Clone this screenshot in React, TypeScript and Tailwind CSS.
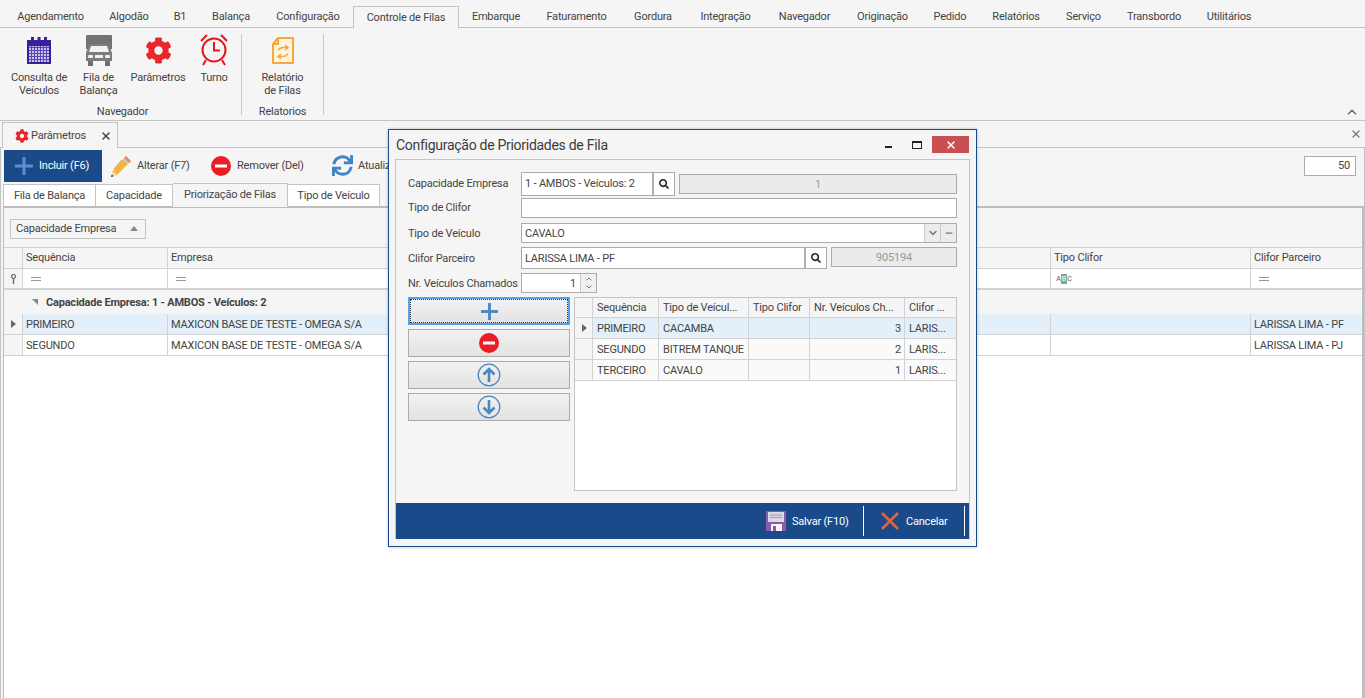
import { FaCog, FaSync, FaSearch } from "react-icons/fa";
import { ChevronDown, ChevronUp, X, Minus } from "lucide-react";

const menuTabs = [
  { label: "Agendamento", width: "w-[93px]" },
  { label: "Algodão", width: "w-[64px]" },
  { label: "B1", width: "w-[38px]" },
  { label: "Balança", width: "w-[64px]" },
  { label: "Configuração", width: "w-[90px]" },
  { label: "Controle de Filas", width: "w-[106px]", active: true },
  { label: "Embarque", width: "w-[74px]" },
  { label: "Faturamento", width: "w-[87px]" },
  { label: "Gordura", width: "w-[66px]" },
  { label: "Integração", width: "w-[79px]" },
  { label: "Navegador", width: "w-[79px]" },
  { label: "Originação", width: "w-[77px]" },
  { label: "Pedido", width: "w-[58px]" },
  { label: "Relatórios", width: "w-[74px]" },
  { label: "Serviço", width: "w-[61px]" },
  { label: "Transbordo", width: "w-[80px]" },
  { label: "Utilitários", width: "w-[70px]" },
];

function CalendarIcon() {
  return (
    <svg width="26" height="28" viewBox="0 0 26 28">
      <rect x="1" y="3" width="24" height="24" fill="#3b1f9e" />
      <rect x="5" y="0" width="3" height="5" fill="#3b1f9e" />
      <rect x="11.5" y="0" width="3" height="5" fill="#3b1f9e" />
      <rect x="18" y="0" width="3" height="5" fill="#3b1f9e" />
      <rect x="3" y="9" width="20" height="16" fill="#c9c3ea" />
      {[10, 13, 16, 19, 22].map((y) => (
        <rect key={y} x="3" y={y} width="20" height="1" fill="#5a45b5" />
      ))}
      {[5, 8, 11, 14, 17, 20].map((x) => (
        <rect key={x} x={x} y="9" width="1" height="16" fill="#5a45b5" />
      ))}
    </svg>
  );
}

function TruckIcon() {
  return (
    <svg width="28" height="32" viewBox="0 0 28 32">
      <path d="M2 0h24a1 1 0 0 1 1 1v13H1V1a1 1 0 0 1 1-1z" fill="#737373" />
      <path d="M4 9h20l3 9v8H1v-8z" fill="#7d7d7d" />
      <path d="M6 11h16l2 6H4z" fill="#f2f2f2" />
      <rect x="3" y="20" width="5" height="3" rx="1" fill="#f2f2f2" />
      <rect x="20" y="20" width="5" height="3" rx="1" fill="#f2f2f2" />
      <rect x="10" y="20" width="8" height="3" fill="#f2f2f2" />
      <rect x="3" y="26" width="5" height="5" fill="#6f6f6f" />
      <rect x="20" y="26" width="5" height="5" fill="#6f6f6f" />
    </svg>
  );
}

function ClockIcon() {
  return (
    <svg width="28" height="33" viewBox="0 0 28 33" fill="none" stroke="#e8141c" strokeWidth="2">
      <circle cx="14" cy="16" r="11.5" />
      <path d="M14 8v8.5h6" />
      <path d="M1 7 7 1M27 7 21 1M6 26l-3 5M22 26l3 5" />
    </svg>
  );
}

function ReportIcon() {
  return (
    <svg width="22" height="27" viewBox="0 0 22 27" fill="none">
      <path d="M6 1h15v25H1V7z" fill="#fdf3df" stroke="#f5a93a" strokeWidth="2" strokeLinejoin="round" />
      <path d="M6 1v6H1" stroke="#f5a93a" strokeWidth="2" />
      <path d="M6 13.5c1-2 3-3 6-3h3M13 8l3 2.5L13 13" stroke="#f5a93a" strokeWidth="1.6" />
      <path d="M16 16.5c-1 2-3 3-6 3H7M9 17l-3 2.5L9 22" stroke="#f5a93a" strokeWidth="1.6" />
    </svg>
  );
}

function PencilIcon() {
  return (
    <svg width="24" height="24" viewBox="0 0 24 24">
      <path d="M17 2 22 7 8 21 2 23l2-6z" fill="#f6b53a" />
      <path d="M17 2 22 7 20 9 15 4z" fill="#e8877c" />
      <path d="M15 4 20 9 18.5 10.5 13.5 5.500z" fill="#c9c9c9" />
      <path d="M4 17 8 21 2 23z" fill="#f3dcb0" />
      <path d="M2.800 20.500 4.500 22.300 2 23z" fill="#333" />
      <path d="M13 6 5 15" stroke="#d98f1c" strokeWidth="1" />
    </svg>
  );
}

function RemoveIcon({ size }: { size: number }) {
  return (
    <svg width={size} height={size} viewBox="0 0 20 20">
      <circle cx="10" cy="10" r="10" fill="#ed1c24" />
      <rect x="4" y="8.500" width="12" height="3" fill="#fff" />
    </svg>
  );
}

function PlusIcon({ color, size }: { color: string; size: number }) {
  return (
    <svg width={size} height={size} viewBox="0 0 18 18">
      <rect x="7.500" y="0" width="3" height="18" fill={color} />
      <rect x="0" y="7.500" width="18" height="3" fill={color} />
    </svg>
  );
}

function ArrowCircle({ up }: { up?: boolean }) {
  return (
    <svg width="24" height="24" viewBox="0 0 24 24" fill="none" stroke="#4a86c0">
      <circle cx="12" cy="12" r="10.800" strokeWidth="1.300" />
      <path
        d={up ? "M12 19V6M6.500 11.500 12 6l5.500 5.500" : "M12 5v13M6.500 12.500 12 18l5.500-5.500"}
        strokeWidth="2.600"
      />
    </svg>
  );
}

function SaveIcon() {
  return (
    <svg width="20" height="20" viewBox="0 0 20 20">
      <path d="M0 0h20v20H0z" fill="#8b5aa8" />
      <rect x="2" y="1" width="16" height="10" fill="#d9d9e4" />
      <rect x="4" y="3.500" width="12" height="1" fill="#9a9ab0" />
      <rect x="4" y="6" width="12" height="1" fill="#9a9ab0" />
      <rect x="5" y="13" width="11" height="7" fill="#f4f4f4" />
      <rect x="7" y="15" width="3" height="5" fill="#8b5aa8" />
    </svg>
  );
}

function AbcIcon() {
  return (
    <span className="flex items-center text-[7px] leading-[10px] tracking-normal text-[#555]">
      <span className="w-[5px] text-center">A</span>
      <span className="w-[6px] bg-[#7aa99a] text-center text-white">B</span>
      <span className="w-[5px] text-center">C</span>
    </span>
  );
}

function EqualsIcon() {
  return <span className="block h-[4px] w-[10px] border-y border-[#999]" />;
}

function PinIcon() {
  return (
    <svg width="7" height="10" viewBox="0 0 7 10" fill="none">
      <circle cx="3.500" cy="2.500" r="2" stroke="#666" strokeWidth="1.200" />
      <path d="M3.500 4.500V10" stroke="#666" strokeWidth="1.400" />
    </svg>
  );
}

function RibbonButton({
  icon,
  lines,
  width,
}: {
  icon: React.ReactNode;
  lines: string[];
  width: string;
}) {
  return (
    <div className={`flex flex-col items-center ${width}`}>
      <div className="flex h-[33px] items-center justify-center">{icon}</div>
      <div className="mt-[4px] whitespace-nowrap text-center leading-[13px]">
        {lines.map((l) => (
          <div key={l}>{l}</div>
        ))}
      </div>
    </div>
  );
}

function SearchButton() {
  return (
    <div className="flex h-full w-[22px] items-center justify-center border-l-2 border-[#b0b0b0] bg-white">
      <FaSearch size={10} className="text-[#222]" />
    </div>
  );
}

function Label({ children, low }: { children: React.ReactNode; low?: boolean }) {
  return (
    <span className={`block w-[113px] shrink-0 whitespace-nowrap ${low ? "pt-[2px]" : ""}`}>{children}</span>
  );
}

function SideButton({ children, focused }: { children: React.ReactNode; focused?: boolean }) {
  return (
    <div
      className={`flex h-[28px] items-center justify-center bg-gradient-to-b from-[#f2f2f2] to-[#e2e2e2] ${
        focused
          ? "border-2 border-[#5aa0e6] outline-1 -outline-offset-3 outline-dotted outline-[#333]"
          : "border border-[#ababab]"
      }`}
    >
      {children}
    </div>
  );
}

const modalCols = ["w-[66px]", "w-[90px]", "w-[61px]", "w-[95px]", "w-[51px]"];

const modalRows = [
  { seq: "PRIMEIRO", tipo: "CACAMBA", nr: "3", active: true },
  { seq: "SEGUNDO", tipo: "BITREM TANQUE", nr: "2" },
  { seq: "TERCEIRO", tipo: "CAVALO", nr: "1" },
];

function Modal() {
  return (
    <div className="absolute left-[388px] top-[129px] flex h-[418px] w-[589px] flex-col border border-[#1a4a8a] bg-[#f5f5f5] pb-[7px] pl-[6px] pr-[6px] shadow-[0_0_3px_rgba(0,0,0,0.25)]">
      <div className="flex h-[29px] shrink-0 items-center justify-between pl-[1px] pr-[1px]">
        <span className="pt-[2px] text-[14px] tracking-[-0.28px] text-[#3c3c3c]">
          Configuração de Prioridades de Fila
        </span>
        <div className="flex items-center">
          <div className="mr-[20px] mt-[5px] h-[2px] w-[7px] bg-[#222]" />
          <div className="mr-[10px] h-[8px] w-[10px] border border-t-2 border-[#222]" />
          <div className="flex h-[17px] w-[37px] items-center justify-center bg-[#c85050]">
            <X size={12} strokeWidth={3} className="text-white" />
          </div>
        </div>
      </div>
      <div className="flex min-h-0 flex-1 flex-col border border-[#c4c4c4] border-b-0">
        <div className="flex-1 pl-[12px] pr-[12px] pt-[12px]">
          <div className="flex h-[24px] items-center">
            <Label>Capacidade Empresa</Label>
            <div className="flex h-full w-[154px] items-center border border-[#ababab] bg-white">
              <span className="flex-1 pl-[3px]">1 - AMBOS - Veículos: 2</span>
              <SearchButton />
            </div>
            <div className="ml-[4px] flex h-[20px] flex-1 items-center justify-center border border-[#ababab] bg-[#ebebeb] pt-[2px] text-[#999]">
              1
            </div>
          </div>
          <div className="mt-[2px] flex h-[20px] items-center">
            <Label>Tipo de Clifor</Label>
            <div className="h-full flex-1 border border-[#ababab] bg-white" />
          </div>
          <div className="mt-[5px] flex h-[20px] items-center">
            <Label low>Tipo de Veículo</Label>
            <div className="flex h-full flex-1 items-center border border-[#ababab] bg-white">
              <span className="flex-1 pl-[3px] pt-[2px]">CAVALO</span>
              <div className="flex h-full w-[16px] items-center justify-center border-l border-[#c8c8c8] bg-[#ececec]">
                <ChevronDown size={12} strokeWidth={3} className="text-[#777]" />
              </div>
              <div className="flex h-full w-[16px] items-center justify-center border-l border-[#c8c8c8] bg-[#ececec]">
                <Minus size={10} strokeWidth={3} className="text-[#777]" />
              </div>
            </div>
          </div>
          <div className="mt-[4px] flex h-[22px] items-start">
            <span className="flex h-[20px] shrink-0 items-center pt-[4px]">
              <Label>Clifor Parceiro</Label>
            </span>
            <div className="flex h-full w-[306px] items-center border border-[#ababab] bg-white">
              <span className="flex-1 pl-[3px] pt-[2px]">LARISSA LIMA - PF</span>
              <SearchButton />
            </div>
            <div className="ml-[4px] flex h-[20px] flex-1 items-center justify-center border border-[#ababab] bg-[#ebebeb] pt-[2px] text-[#999]">
              905194
            </div>
          </div>
          <div className="mt-[4px] flex h-[20px] items-center">
            <Label low>Nr. Veículos Chamados</Label>
            <div className="flex h-full w-[76px] items-center border border-[#ababab] bg-white">
              <span className="flex-1 pr-[4px] pt-[2px] text-right">1</span>
              <div className="flex h-full w-[16px] flex-col items-center justify-center border-l border-[#c8c8c8] bg-[#f0f0f0]">
                <ChevronUp size={8} strokeWidth={3} className="text-[#777]" />
                <ChevronDown size={8} strokeWidth={3} className="text-[#777]" />
              </div>
            </div>
          </div>
          <div className="mt-[4px] flex">
            <div className="flex w-[162px] flex-col gap-[4px]">
              <SideButton focused>
                <PlusIcon color="#4a86c0" size={17} />
              </SideButton>
              <SideButton>
                <RemoveIcon size={20} />
              </SideButton>
              <SideButton>
                <ArrowCircle up />
              </SideButton>
              <SideButton>
                <ArrowCircle />
              </SideButton>
            </div>
            <div className="ml-[4px] h-[194px] flex-1 border border-[#c4c4c4] bg-white">
              <div className="flex h-[20px] bg-[#f5f5f5]">
                <div className="w-[18px] border-b border-r border-[#d2d2d2]" />
                {["Sequência", "Tipo de Veícul...", "Tipo Clifor", "Nr. Veículos Ch...", "Clifor ..."].map(
                  (h, i) => (
                    <div
                      key={h}
                      className={`${modalCols[i]} flex items-center truncate whitespace-nowrap border-b border-r border-[#d2d2d2] pl-[4px] pt-[2px] last:border-r-0`}
                    >
                      {h}
                    </div>
                  ),
                )}
              </div>
              {modalRows.map((r) => (
                <div key={r.seq} className={`flex h-[21px] ${r.active ? "bg-[#e3eff9]" : "bg-[#fafafa]"}`}>
                  <div className="flex w-[18px] items-center justify-center border-b border-r border-[#d2d2d2] bg-[#f5f5f5]">
                    {r.active && (
                      <span className="ml-[2px] border-y-[4px] border-l-[5px] border-y-transparent border-l-[#666]" />
                    )}
                  </div>
                  <div className={`${modalCols[0]} flex items-center border-b border-r border-[#d2d2d2] pl-[4px] pt-[2px]`}>
                    {r.seq}
                  </div>
                  <div
                    className={`${modalCols[1]} flex items-center whitespace-nowrap border-b border-r border-[#d2d2d2] pl-[4px] pt-[2px]`}
                  >
                    {r.tipo}
                  </div>
                  <div className={`${modalCols[2]} border-b border-r border-[#d2d2d2]`} />
                  <div
                    className={`${modalCols[3]} flex items-center justify-end border-b border-r border-[#d2d2d2] pr-[3px] pt-[2px]`}
                  >
                    {r.nr}
                  </div>
                  <div className={`${modalCols[4]} flex items-center border-b border-[#d2d2d2] pl-[4px] pt-[2px]`}>
                    LARIS...
                  </div>
                </div>
              ))}
            </div>
          </div>
        </div>
        <div className="flex h-[36px] shrink-0 items-center justify-end bg-[#1a4a8a] pr-[4px] text-white">
          <SaveIcon />
          <span className="ml-[6px] w-[71px] pt-[2px]">Salvar (F10)</span>
          <div className="h-[30px] border-l border-white" />
          <svg width="18" height="18" viewBox="0 0 18 18" className="ml-[17px]">
            <path d="M1 1 17 17M17 1 1 17" stroke="#e8623a" strokeWidth="2.600" />
          </svg>
          <span className="ml-[7px] w-[58px] pt-[2px]">Cancelar</span>
          <div className="h-[30px] border-l border-white" />
        </div>
      </div>
    </div>
  );
}

function GridRow({
  seq,
  parceiro,
  active,
}: {
  seq: string;
  parceiro: string;
  active?: boolean;
}) {
  return (
    <div className={`flex h-[21px] border-b border-[#d2d2d2] ${active ? "bg-[#e3eff9]" : "bg-white"}`}>
      <div className="flex w-[19px] items-center justify-center border-r border-[#d2d2d2] bg-[#f5f5f5]">
        {active && <span className="border-y-[4px] border-l-[5px] border-y-transparent border-l-[#666]" />}
      </div>
      <div className="flex w-[145px] items-center border-r border-[#d2d2d2] pl-[3px] pt-[2px]">{seq}</div>
      <div className="flex w-[883px] items-center border-r border-[#d2d2d2] pl-[3px] pt-[2px]">
        MAXICON BASE DE TESTE - OMEGA S/A
      </div>
      <div className="w-[200px] border-r border-[#d2d2d2]" />
      <div className="flex flex-1 items-center pl-[3px] pt-[2px]">{parceiro}</div>
    </div>
  );
}

export default function App() {
  return (
    <div className="relative flex h-[698px] w-[1365px] flex-col overflow-hidden bg-white [font-family:Roboto,sans-serif] text-[11px] tracking-[-0.2px] text-[#444]">
      {/* menu */}
      <div className="flex h-[28px] shrink-0 items-end border-b border-[#c4c4c4] bg-[#f5f5f5] pl-[4px]">
        {menuTabs.map((t) => (
          <div
            key={t.label}
            className={`${t.width} flex items-center justify-center whitespace-nowrap pt-[2px] ${
              t.active
                ? "relative top-[1px] h-[22px] border border-b-0 border-[#c4c4c4] bg-[#f5f5f5]"
                : "h-[21px]"
            }`}
          >
            {t.label}
          </div>
        ))}
      </div>

      {/* ribbon */}
      <div className="flex h-[93px] shrink-0 border-b border-[#c4c4c4] bg-[#f5f5f5] pt-[6px]">
        <div className="flex h-[81px] flex-col border-r border-[#c8c8c8] pl-[4px]">
          <div className="flex h-[71px] shrink-0 items-start">
            <RibbonButton icon={<CalendarIcon />} lines={["Consulta de", "Veículos"]} width="w-[70px]" />
            <RibbonButton icon={<TruckIcon />} lines={["Fila de", "Balança"]} width="w-[49px]" />
            <RibbonButton icon={<FaCog size={27} className="text-[#e8262c]" />} lines={["Parâmetros"]} width="w-[70px]" />
            <RibbonButton icon={<ClockIcon />} lines={["Turno"]} width="w-[42px]" />
          </div>
          <div className="w-[237px] text-center leading-[13px]">Navegador</div>
        </div>
        <div className="flex h-[81px] w-[82px] flex-col items-center border-r border-[#c8c8c8]">
          <div className="h-[71px] shrink-0">
            <RibbonButton icon={<ReportIcon />} lines={["Relatório", "de Filas"]} width="w-[60px]" />
          </div>
          <div className="leading-[13px]">Relatorios</div>
        </div>
        <div className="flex flex-1 items-end justify-end pb-[1px] pr-[6px]">
          <ChevronUp size={14} strokeWidth={3} className="text-[#777]" />
        </div>
      </div>

      {/* document tab */}
      <div className="flex h-[27px] shrink-0 items-end justify-between border-b border-[#c4c4c4] bg-[#f5f5f5] pl-[2px]">
        <div className="relative top-[1px] flex h-[26px] w-[116px] items-center border border-b-0 border-[#c4c4c4] bg-[#f5f5f5] pl-[12px]">
          <FaCog size={14} className="text-[#e8262c]" />
          <span className="ml-[2px] w-[69px] pt-[2px]">Parâmetros</span>
          <X size={12} strokeWidth={3} className="text-[#444]" />
        </div>
        <X size={12} strokeWidth={2.500} className="mb-[7px] mr-[3px] text-[#777]" />
      </div>

      {/* content */}
      <div className="flex min-h-0 flex-1 flex-col border-l border-r border-[#c4c4c4] bg-[#f5f5f5] pl-[2px]">
        <div className="flex h-[35px] shrink-0 items-center">
          <div className="ml-[1px] flex h-[32px] w-[98px] items-center bg-[#1a4a8a] pl-[11px] text-white">
            <PlusIcon color="#5b8fc9" size={18} />
            <span className="ml-[6px] pt-[2px]">Incluir (F6)</span>
          </div>
          <div className="ml-[7px] flex w-[95px] items-center">
            <PencilIcon />
            <span className="ml-[4px] pt-[2px]">Alterar (F7)</span>
          </div>
          <div className="ml-[7px] flex w-[115px] items-center">
            <RemoveIcon size={20} />
            <span className="ml-[6px] pt-[2px]">Remover (Del)</span>
          </div>
          <div className="ml-[6px] flex items-center">
            <FaSync size={21} className="text-[#3f86c4]" />
            <span className="ml-[5px] pt-[2px]">Atualizar</span>
          </div>
          <div className="ml-auto mr-[8px] flex h-[20px] w-[52px] items-center justify-end border border-[#ababab] bg-white pr-[5px] pt-[2px]">
            50
          </div>
        </div>

        <div className="flex h-[23px] shrink-0 items-end">
          <div className="flex h-[22px] w-[93px] items-center justify-center border border-b-0 border-[#c4c4c4] bg-white pt-[2px]">
            Fila de Balança
          </div>
          <div className="flex h-[22px] w-[77px] items-center justify-center border border-b-0 border-l-0 border-[#c4c4c4] bg-white pt-[2px]">
            Capacidade
          </div>
          <div className="relative top-[1px] flex h-[24px] w-[115px] items-center justify-center border border-b-0 border-l-0 border-[#c4c4c4] bg-[#f5f5f5]">
            Priorização de Filas
          </div>
          <div className="flex h-[22px] w-[92px] items-center justify-center border border-b-0 border-l-0 border-[#c4c4c4] bg-white pt-[2px]">
            Tipo de Veículo
          </div>
        </div>

        <div className="flex min-h-0 flex-1 flex-col border-l border-r-2 border-t-2 border-[#bdbdbd] bg-white">
          <div className="flex h-[39px] shrink-0 items-center bg-[#f5f5f5] pl-[6px] pt-[2px]">
            <div className="flex h-[20px] w-[136px] items-center border border-[#c4c4c4] pl-[5px]">
              <span className="w-[114px] pt-[2px]">Capacidade Empresa</span>
              <span className="border-x-[4px] border-b-[5px] border-x-transparent border-b-[#888]" />
            </div>
          </div>
          <div className="flex h-[22px] shrink-0 border-y border-[#d2d2d2] bg-[#f5f5f5]">
            <div className="w-[19px] border-r border-[#d2d2d2]" />
            <div className="flex w-[145px] items-center border-r border-[#d2d2d2] pl-[3px]">Sequência</div>
            <div className="flex w-[883px] items-center border-r border-[#d2d2d2] pl-[3px]">Empresa</div>
            <div className="flex w-[200px] items-center border-r border-[#d2d2d2] pl-[3px]">Tipo Clifor</div>
            <div className="flex flex-1 items-center pl-[3px]">Clifor Parceiro</div>
          </div>
          <div className="flex h-[21px] shrink-0 border-b-2 border-[#d2d2d2] bg-white">
            <div className="flex w-[19px] items-center justify-center border-r border-[#d2d2d2] bg-[#f5f5f5]">
              <PinIcon />
            </div>
            <div className="flex w-[145px] items-center border-r border-[#d2d2d2] pl-[8px]">
              <EqualsIcon />
            </div>
            <div className="flex w-[883px] items-center border-r border-[#d2d2d2] pl-[8px]">
              <EqualsIcon />
            </div>
            <div className="flex w-[200px] items-center border-r border-[#d2d2d2] pl-[5px]">
              <AbcIcon />
            </div>
            <div className="flex flex-1 items-center pl-[8px]">
              <EqualsIcon />
            </div>
          </div>
          <div className="flex h-[24px] shrink-0 items-center bg-[#f5f5f5] pl-[28px] font-bold">
            <span className="border-l-[6px] border-t-[6px] border-l-transparent border-t-[#888]" />
            <span className="ml-[8px] pt-[2px]">Capacidade Empresa: 1 - AMBOS - Veículos: 2</span>
          </div>
          <GridRow seq="PRIMEIRO" parceiro="LARISSA LIMA - PF" active />
          <GridRow seq="SEGUNDO" parceiro="LARISSA LIMA - PJ" />
        </div>
      </div>

      <Modal />
    </div>
  );
}
